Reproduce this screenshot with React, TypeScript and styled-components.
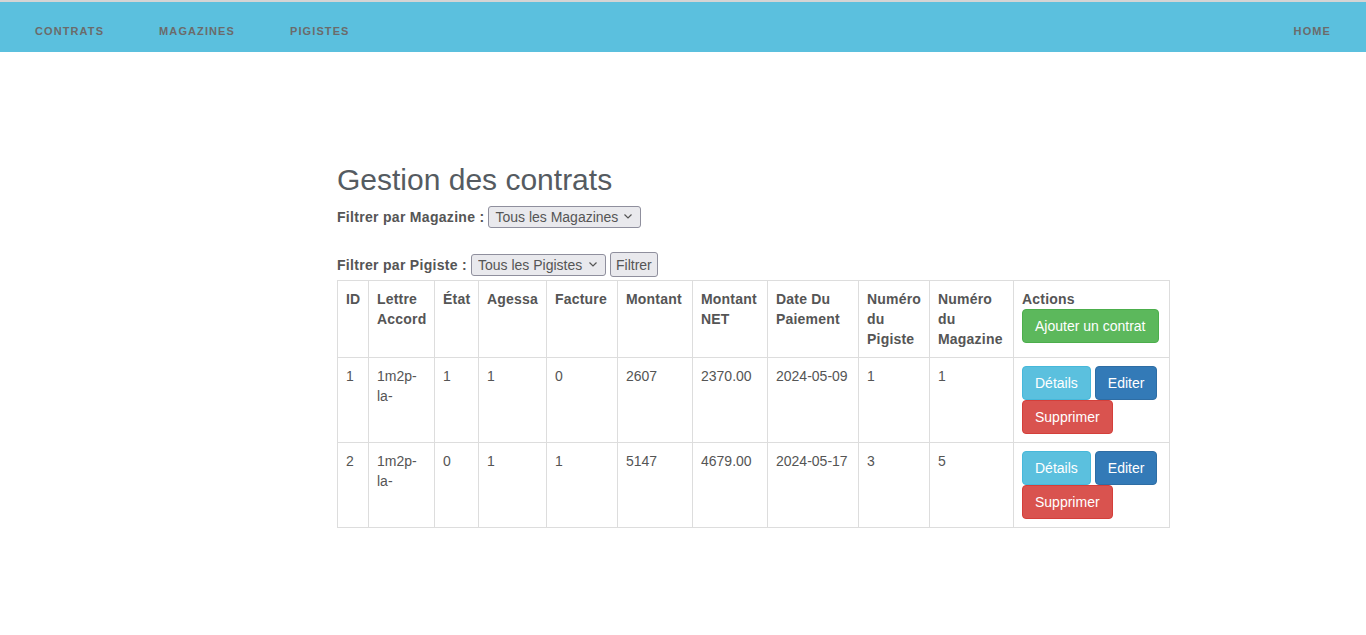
import React from "react";
import styled, { createGlobalStyle } from "styled-components";

const GlobalStyle = createGlobalStyle`
  html, body { margin: 0; padding: 0; background: #fff; }
  body {
    font-family: "Liberation Sans", Arial, Helvetica, sans-serif;
    font-size: 14px;
    line-height: 20px;
    color: #555;
  }
  * { box-sizing: border-box; }
`;

const NavBar = styled.nav`
  display: flex;
  align-items: flex-start;
  height: 52px;
  border-top: 2px solid #d4d4d4;
  background: #5bc0de;
  padding: 0 35px;
`;

const NavGroup = styled.div<{ $grow?: boolean }>`
  display: flex;
  gap: 55px;
  flex: ${(p) => (p.$grow ? 1 : "none")};
`;

const NavLink = styled.a`
  display: block;
  padding-top: 19px;
  font-size: 11px;
  line-height: 20px;
  font-weight: bold;
  letter-spacing: 1.1px;
  text-transform: uppercase;
  color: #6b6b6b;
  text-decoration: none;
  cursor: pointer;
`;

const Main = styled.main`
  padding: 91px 0 0 337px;
`;

const Title = styled.h2`
  margin: 20px 0 10px;
  font-size: 30px;
  line-height: 33px;
  font-weight: 500;
  color: #555b61;
`;

const FilterRow = styled.form<{ $top?: number }>`
  display: flex;
  align-items: center;
  gap: 4px;
  margin: ${(p) => p.$top ?? 0}px 0 0;
  height: ${(p) => (p.$top ? 25 : 22)}px;
`;

const Label = styled.label`
  font-weight: bold;
  letter-spacing: 0.3px;
`;

const SelectWrap = styled.span`
  position: relative;
  display: inline-flex;
`;

const Select = styled.select<{ $w: number }>`
  appearance: none;
  -webkit-appearance: none;
  width: ${(p) => p.$w}px;
  height: 22px;
  padding: 0 20px 0 6px;
  font-family: inherit;
  font-size: 14px;
  color: #555;
  background: #e9e9ed;
  border: 1px solid #8f8f9d;
  border-radius: 3px;
  outline: none;
`;

const Chevron = styled.svg`
  position: absolute;
  right: 9px;
  top: 8px;
  width: 8px;
  height: 5px;
  pointer-events: none;
`;

const PlainButton = styled.button`
  height: 25px;
  padding: 0 5px;
  font-family: inherit;
  font-size: 14px;
  color: #555;
  background: #e9e9ed;
  border: 1px solid #8f8f9d;
  border-radius: 3px;
  cursor: pointer;
`;

const Table = styled.table`
  margin-top: 3px;
  border-collapse: collapse;
  table-layout: fixed;
  width: 832px;
  border: 1px solid #ddd;
`;

const Col = styled.col<{ $w: number }>`
  width: ${(p) => p.$w}px;
`;

const Th = styled.th`
  border: 1px solid #ddd;
  padding: 8px;
  text-align: left;
  vertical-align: top;
  font-weight: bold;
  line-height: 20px;
  letter-spacing: 0.2px;
`;

const Td = styled.td`
  border: 1px solid #ddd;
  padding: 8px;
  vertical-align: top;
  line-height: 20px;
`;

const Actions = styled.div`
  display: flex;
  flex-wrap: wrap;
  column-gap: 4px;
`;

const variants: Record<string, { bg: string; border: string }> = {
  info: { bg: "#5bc0de", border: "#46b8da" },
  primary: { bg: "#337ab7", border: "#2e6da4" },
  danger: { bg: "#d9534f", border: "#d43f3a" },
  success: { bg: "#5cb85c", border: "#4cae4c" },
};

const Btn = styled.button<{ $v: string }>`
  display: inline-block;
  padding: 6px 12px;
  font-family: inherit;
  font-size: 14px;
  line-height: 20px;
  letter-spacing: 0;
  font-weight: normal;
  white-space: nowrap;
  color: #fff;
  background: ${(p) => variants[p.$v].bg};
  border: 1px solid ${(p) => variants[p.$v].border};
  border-radius: 4px;
  cursor: pointer;
`;

const widths = [31, 66, 44, 68, 71, 75, 75, 91, 71, 84, 156];

const headers = [
  "ID",
  "Lettre Accord",
  "État",
  "Agessa",
  "Facture",
  "Montant",
  "Montant NET",
  "Date Du Paiement",
  "Numéro du Pigiste",
  "Numéro du Magazine",
];

const rows = [
  ["1", "1m2p-la-", "1", "1", "0", "2607", "2370.00", "2024-05-09", "1", "1"],
  ["2", "1m2p-la-", "0", "1", "1", "5147", "4679.00", "2024-05-17", "3", "5"],
];

function FilterSelect({ label, width }: { label: string; width: number }) {
  return (
    <SelectWrap>
      <Select $w={width}>
        <option>{label}</option>
      </Select>
      <Chevron viewBox="0 0 8 5">
        <path d="M0.5 0.5 L4 4 L7.5 0.5" fill="none" stroke="#555" strokeWidth="1.2" />
      </Chevron>
    </SelectWrap>
  );
}

export default function App() {
  return (
    <>
      <GlobalStyle />
      <NavBar>
        <NavGroup $grow>
          <NavLink>Contrats</NavLink>
          <NavLink>Magazines</NavLink>
          <NavLink>Pigistes</NavLink>
        </NavGroup>
        <NavGroup>
          <NavLink>Home</NavLink>
        </NavGroup>
      </NavBar>
      <Main>
        <Title>Gestion des contrats</Title>
        <FilterRow onSubmit={(e) => e.preventDefault()}>
          <Label>Filtrer par Magazine :</Label>
          <FilterSelect label="Tous les Magazines" width={153} />
        </FilterRow>
        <FilterRow $top={24} onSubmit={(e) => e.preventDefault()}>
          <Label>Filtrer par Pigiste :</Label>
          <FilterSelect label="Tous les Pigistes" width={135} />
          <PlainButton type="submit">Filtrer</PlainButton>
        </FilterRow>
        <Table>
          <colgroup>
            {widths.map((w, i) => (
              <Col key={i} $w={w} />
            ))}
          </colgroup>
          <thead>
            <tr>
              {headers.map((h) => (
                <Th key={h}>{h}</Th>
              ))}
              <Th>
                <div>Actions</div>
                <Btn $v="success">Ajouter un contrat</Btn>
              </Th>
            </tr>
          </thead>
          <tbody>
            {rows.map((r) => (
              <tr key={r[0]}>
                {r.map((c, i) => (
                  <Td key={i}>{c}</Td>
                ))}
                <Td>
                  <Actions>
                    <Btn $v="info">Détails</Btn>
                    <Btn $v="primary">Editer</Btn>
                    <Btn $v="danger">Supprimer</Btn>
                  </Actions>
                </Td>
              </tr>
            ))}
          </tbody>
        </Table>
      </Main>
    </>
  );
}
